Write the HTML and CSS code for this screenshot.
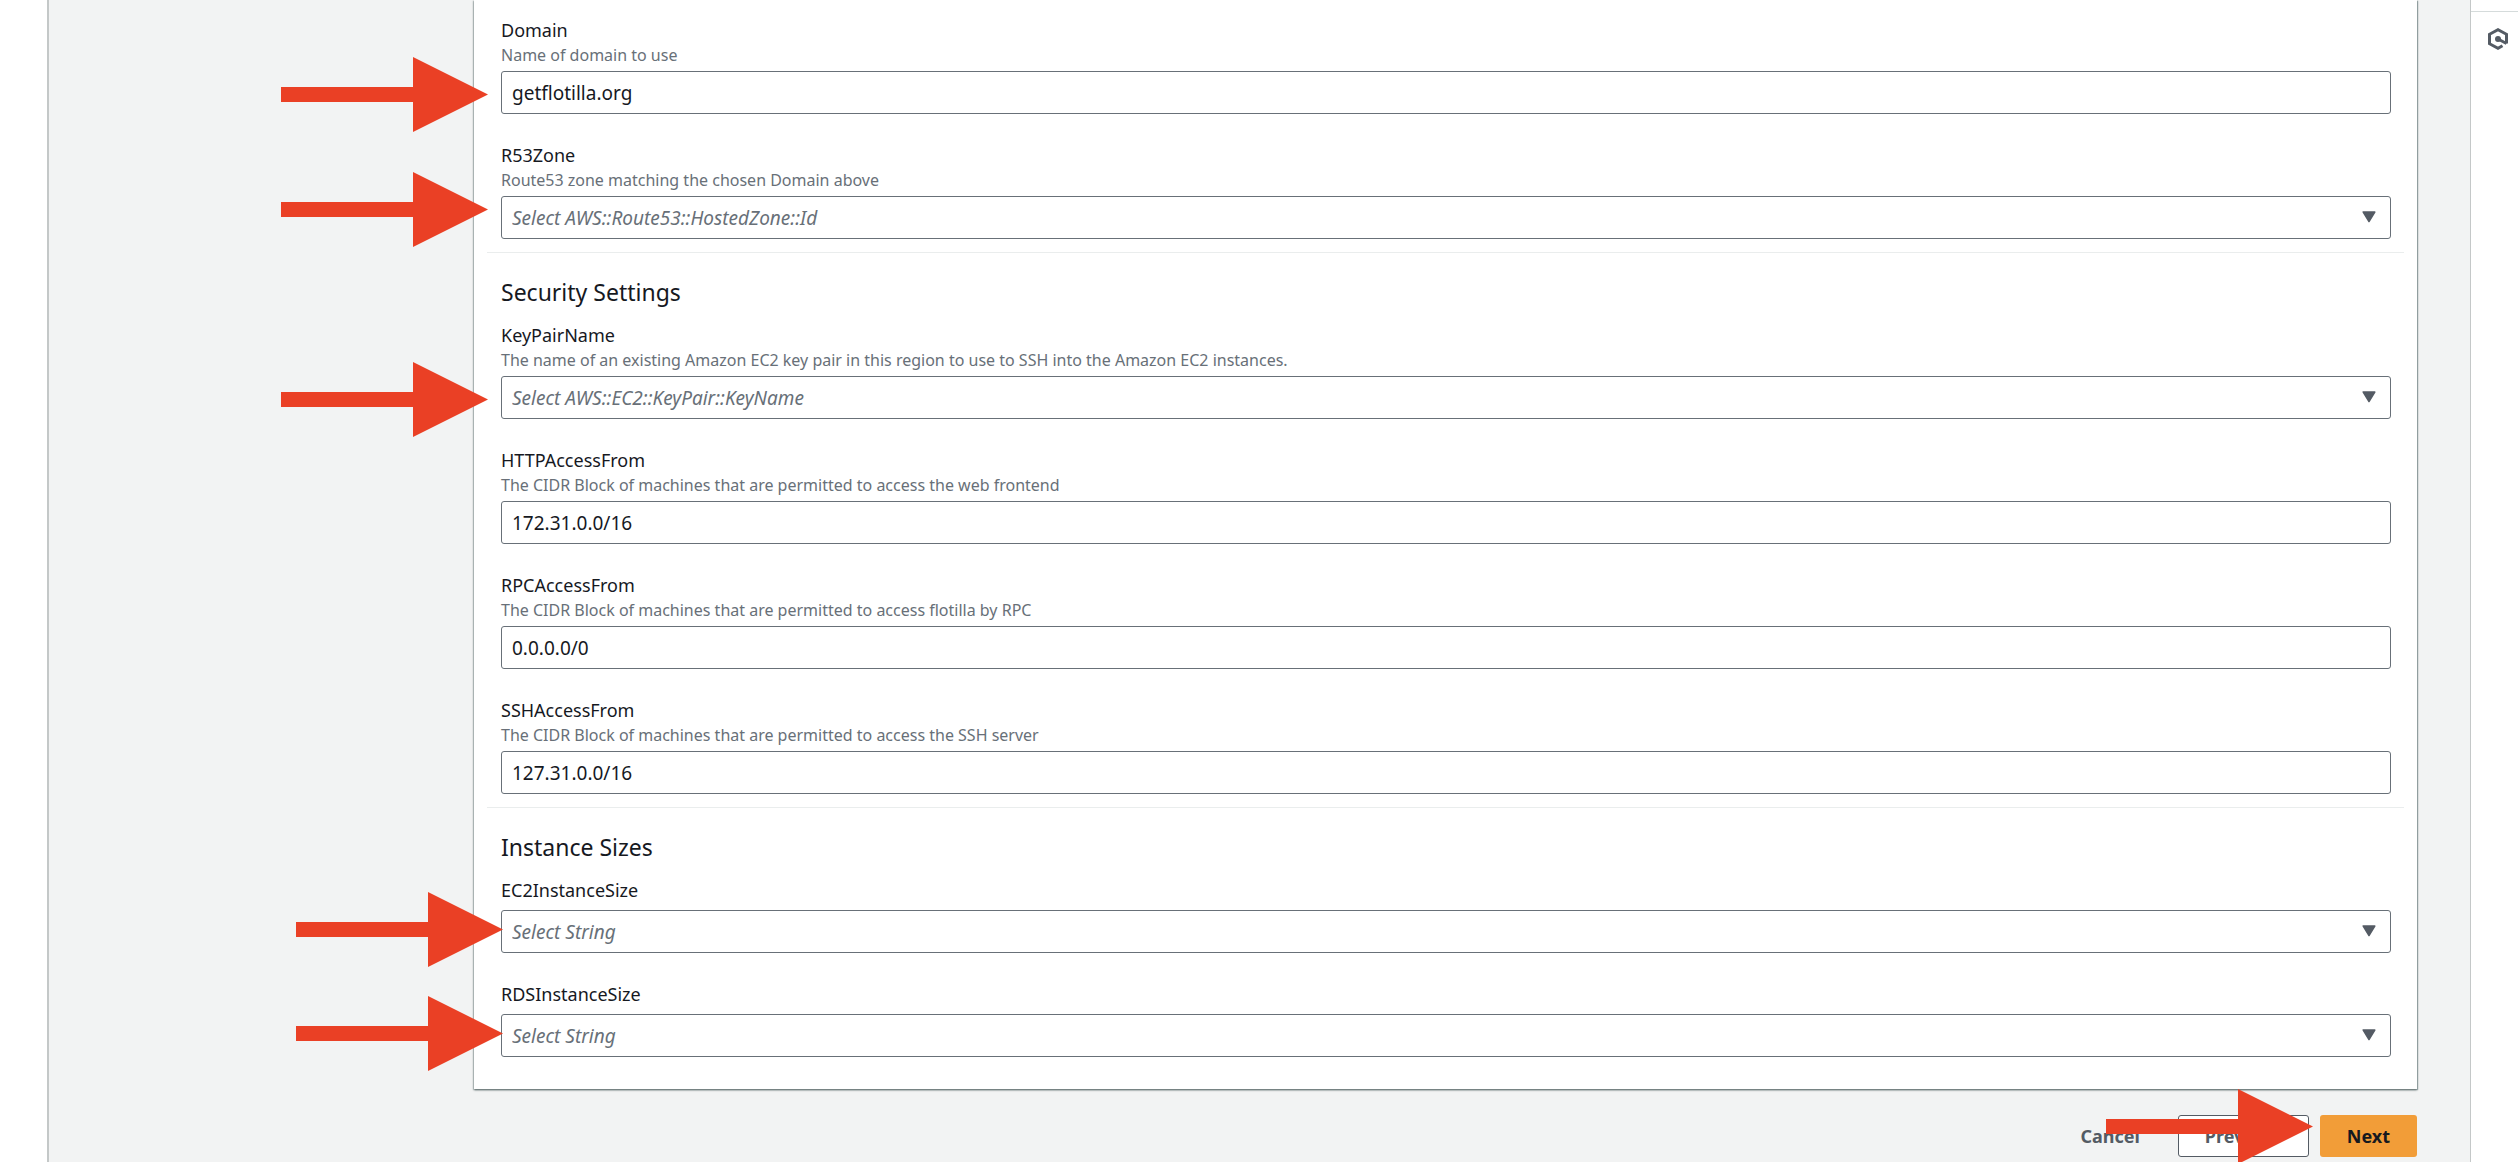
FILE: index.html
```html
<!DOCTYPE html>
<html lang="en">
<head>
<meta charset="utf-8">
<title>Specify stack details</title>
<link rel="stylesheet" href="styles.css">
</head>
<body>
<svg class="sprite" aria-hidden="true">
  <symbol id="arrow" viewBox="0 0 207 75"><path d="M0 30H132V0L207 37.500L132 75V45H0Z"/></symbol>
  <symbol id="caret" viewBox="0 0 14 12"><path d="M1.200 1H12.800L7 10.500Z" stroke-width="1.500" stroke-linejoin="round"/></symbol>
</svg>
<div class="app">
  <div class="nav-strip"></div>
  <main class="content">
    <form class="wizard">
      <div class="card">
        <section class="group">
          <div class="field">
            <label for="domain">Domain</label>
            <p class="hint">Name of domain to use</p>
            <div class="control">
              <input id="domain" type="text" value="getflotilla.org">
              <svg class="arrow arrow-high" aria-hidden="true"><use href="#arrow"/></svg>
            </div>
          </div>
          <div class="field">
            <label for="zone">R53Zone</label>
            <p class="hint">Route53 zone matching the chosen Domain above</p>
            <div class="control">
              <select id="zone"><option>Select AWS::Route53::HostedZone::Id</option></select>
              <svg class="caret" aria-hidden="true"><use href="#caret"/></svg>
              <svg class="arrow arrow-higher" aria-hidden="true"><use href="#arrow"/></svg>
            </div>
          </div>
        </section>
        <section class="group">
          <h2>Security Settings</h2>
          <div class="field">
            <label for="keypair">KeyPairName</label>
            <p class="hint">The name of an existing Amazon EC2 key pair in this region to use to SSH into the Amazon EC2 instances.</p>
            <div class="control">
              <select id="keypair"><option>Select AWS::EC2::KeyPair::KeyName</option></select>
              <svg class="caret" aria-hidden="true"><use href="#caret"/></svg>
              <svg class="arrow arrow-high" aria-hidden="true"><use href="#arrow"/></svg>
            </div>
          </div>
          <div class="field">
            <label for="http">HTTPAccessFrom</label>
            <p class="hint">The CIDR Block of machines that are permitted to access the web frontend</p>
            <div class="control"><input id="http" type="text" value="172.31.0.0/16"></div>
          </div>
          <div class="field">
            <label for="rpc">RPCAccessFrom</label>
            <p class="hint">The CIDR Block of machines that are permitted to access flotilla by RPC</p>
            <div class="control"><input id="rpc" type="text" value="0.0.0.0/0"></div>
          </div>
          <div class="field">
            <label for="ssh">SSHAccessFrom</label>
            <p class="hint">The CIDR Block of machines that are permitted to access the SSH server</p>
            <div class="control"><input id="ssh" type="text" value="127.31.0.0/16"></div>
          </div>
        </section>
        <section class="group">
          <h2>Instance Sizes</h2>
          <div class="field">
            <label for="ec2">EC2InstanceSize</label>
            <div class="control">
              <select id="ec2"><option>Select String</option></select>
              <svg class="caret" aria-hidden="true"><use href="#caret"/></svg>
              <svg class="arrow arrow-near" aria-hidden="true"><use href="#arrow"/></svg>
            </div>
          </div>
          <div class="field">
            <label for="rds">RDSInstanceSize</label>
            <div class="control">
              <select id="rds"><option>Select String</option></select>
              <svg class="caret" aria-hidden="true"><use href="#caret"/></svg>
              <svg class="arrow arrow-near" aria-hidden="true"><use href="#arrow"/></svg>
            </div>
          </div>
        </section>
      </div>
      <div class="actions">
        <button type="button" class="btn btn-link">Cancel</button>
        <button type="button" class="btn btn-normal">Previous</button>
        <div class="next">
          <button type="submit" class="btn btn-primary">Next</button>
          <svg class="arrow arrow-next" aria-hidden="true"><use href="#arrow"/></svg>
        </div>
      </div>
    </form>
  </main>
  <aside class="rail">
    <button type="button" class="rail-btn" aria-label="Open assistant">
      <svg viewBox="0 0 20 22" aria-hidden="true">
        <path d="M14.500 17.800L10 20.300L1.500 15.700V6.300L10 1.700L18.500 6.300V15.500" fill="none" stroke="currentColor" stroke-width="3"/>
        <path d="M10 11L18.500 15.500" stroke="currentColor" stroke-width="3"/>
        <circle cx="10" cy="11" r="3" fill="currentColor"/>
      </svg>
    </button>
  </aside>
</div>
</body>
</html>
```
FILE: styles.css
```css
* { box-sizing: border-box; }

body {
  margin: 0;
  background: #fff;
  color: #16191f;
  font-family: "Noto Sans", sans-serif;
  font-size: 18px;
  line-height: 24px;
}

.sprite { position: absolute; width: 0; height: 0; }

.app { display: flex; min-height: 100vh; }

.nav-strip { flex: 0 0 47px; }

.content {
  flex: 1;
  min-width: 0;
  overflow: hidden;
  padding: 0 53px 4px 425px;
  background: #f2f3f3;
  border-left: 2px solid #c4c8c8;
}

.card {
  padding: 18px 13px 32px;
  background: #fff;
  box-shadow: 0 1px 2px 0 #5f6b6b, 1px 1px 1px 0 #aab7b8, -1px 1px 1px 0 #cdd4d4;
}

.group { padding: 0 13px 0 14px; }
.group + .group {
  margin-top: 13px;
  padding-top: 24px;
  border-top: 1px solid #eaeded;
}

h2 {
  margin: 0 0 16px;
  font-size: 23px;
  font-weight: 400;
  line-height: 30px;
}

.field + .field { margin-top: 29px; }

.field label { display: block; }

.hint {
  margin: 0;
  color: #687078;
  font-size: 16px;
  line-height: 26px;
}

.control { position: relative; margin-top: 3px; }
label + .control { margin-top: 8px; }

input, select {
  display: block;
  width: 100%;
  height: 43px;
  margin: 0;
  padding: 0 10px;
  border: 1px solid #687078;
  border-radius: 3px;
  background: #fff;
  color: inherit;
  font: inherit;
  font-size: 19px;
  appearance: none;
}

select { color: #687078; font-style: italic; }

.caret {
  position: absolute;
  top: 15px;
  right: 15px;
  width: 14px;
  height: 12px;
  fill: #545b64;
  stroke: #545b64;
  pointer-events: none;
}

.arrow {
  position: absolute;
  left: -220px;
  width: 207px;
  height: 75px;
  fill: #ea4025;
  pointer-events: none;
}
.arrow-high { top: -14px; }
.arrow-higher { top: -24px; }
.arrow-near { top: -18px; left: -205px; }
.arrow-next { top: -26px; left: -214px; }

.actions {
  display: flex;
  justify-content: flex-end;
  gap: 11px;
  margin-top: 26px;
}

.next { position: relative; }

.btn {
  height: 42px;
  padding: 0 26px;
  border: 1px solid transparent;
  border-radius: 3px;
  background: transparent;
  color: #545b64;
  font: inherit;
  font-weight: 700;
}
.btn-normal { background: #fff; border-color: #545b64; }
.btn-primary { background: #f29d38; color: #16191f; }

.rail {
  flex: 0 0 48px;
  padding-top: 11px;
  border-left: 1px solid #c4c8c8;
}

.rail-btn {
  display: flex;
  justify-content: center;
  width: 100%;
  padding: 16px 0 0 7px;
  border: 0;
  border-top: 1px solid #d5dbdb;
  background: none;
  color: #545b64;
}
.rail-btn svg { flex: none; width: 20px; height: 22px; }
```
